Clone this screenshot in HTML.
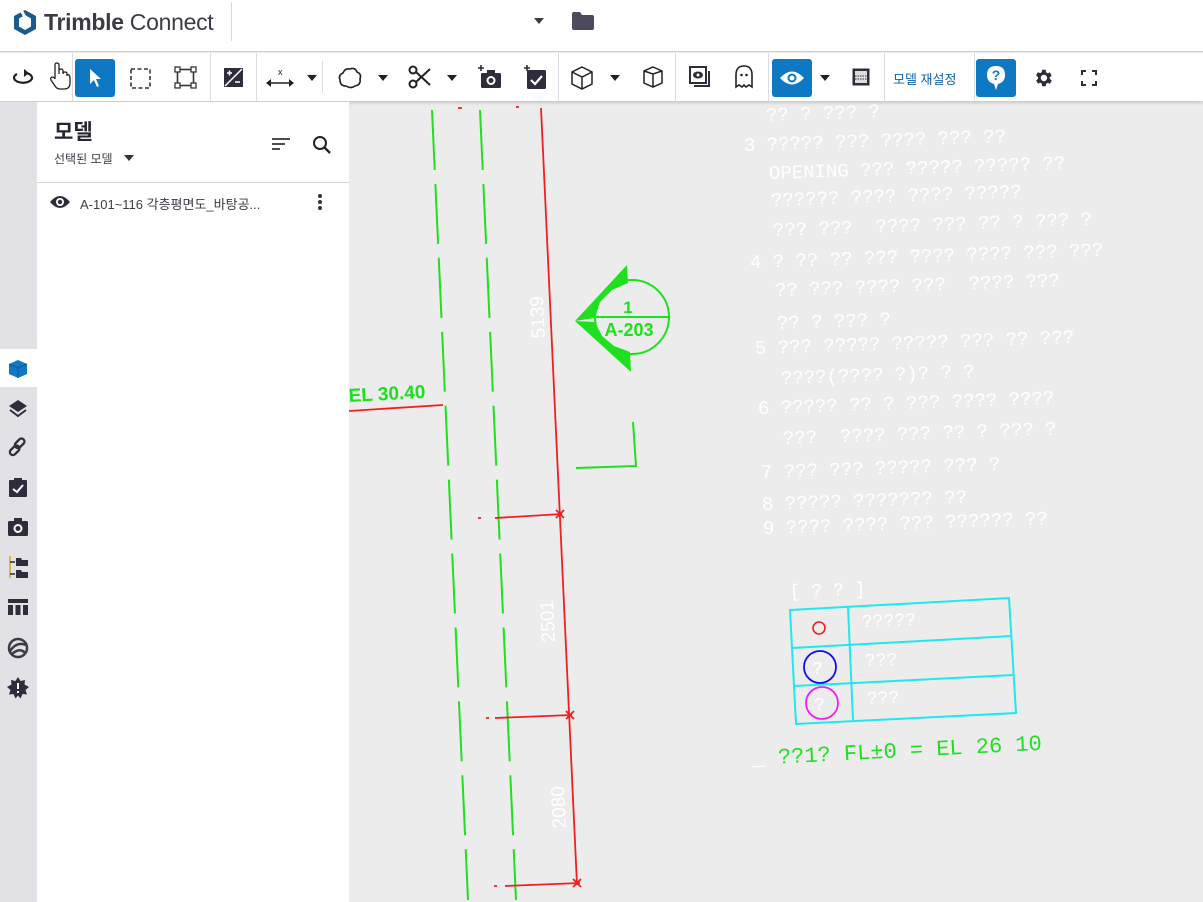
<!DOCTYPE html>
<html><head><meta charset="utf-8"><style>
*{margin:0;padding:0;box-sizing:border-box}
body{width:1203px;height:902px;overflow:hidden;background:#ececec;font-family:"Liberation Sans","Noto Sans CJK KR",sans-serif;position:relative}
#hdr{position:absolute;left:0;top:0;width:1203px;height:52px;background:#fff;border-bottom:1px solid #d0d0d6}
#tb{position:absolute;left:0;top:53px;width:1203px;height:48px;background:#fff;box-shadow:0 2px 3px rgba(0,0,0,.15)}
.sep{position:absolute;top:0;width:1px;height:48px;background:#dcdce0}
.ic{position:absolute;top:6px;width:40px;height:38px}
.on{background:#0e79c2;border-radius:3px}
#rail{position:absolute;left:0;top:102px;width:37px;height:800px;background:#e1e1e6}
#panel{position:absolute;left:37px;top:102px;width:312px;height:800px;background:#fff}
.cad{position:absolute;color:#fff;font-family:"Liberation Mono",monospace;font-size:19px;white-space:pre;transform:rotate(-2deg);transform-origin:left}
</style></head><body>
<div id="hdr">
<svg style="position:absolute;left:12px;top:9px" width="26" height="27" viewBox="0 0 26 27"><path d="M13 1 L24 7 L24 20 L13 26 L2 20 L2 7 Z" fill="#1b5b8c"/><path d="M13 6 L19 9.5 L19 17.5 L13 21 L7 17.5 L7 9.5 Z" fill="#fff"/><rect x="11" y="0" width="3" height="7" fill="#fff" transform="rotate(-30 13 7)"/></svg>
<div style="position:absolute;left:44px;top:9px;font-size:23px;color:#3b3b45;letter-spacing:-.3px"><span style="font-weight:bold">Trimble</span> Connect</div>
<div style="position:absolute;left:231px;top:2px;width:1px;height:39px;background:#d8d8dc"></div>
<svg style="position:absolute;left:534px;top:18px" width="10" height="6"><path d="M0 0H10L5 6Z" fill="#3b3b45"/></svg>
<svg style="position:absolute;left:572px;top:12px" width="22" height="18"><path d="M0 2Q0 0 2 0H8L10 3H20Q22 3 22 5V16Q22 18 20 18H2Q0 18 0 16Z" fill="#4c4a5c"/></svg>
</div>
<div id="tb">
<div class="sep" style="left:72px"></div><div class="sep" style="left:210px"></div><div class="sep" style="left:256px"></div><div class="sep" style="left:322px;top:8px;height:32px"></div><div class="sep" style="left:558px"></div><div class="sep" style="left:675px"></div><div class="sep" style="left:768px"></div><div class="sep" style="left:884px"></div><div class="sep" style="left:974px"></div>
<svg style="position:absolute;left:12px;top:16px" width="24" height="18" viewBox="0 0 24 18"><path d="M5 5A9 5 0 1 0 14 4" fill="none" stroke="#222" stroke-width="2.2"/><path d="M12 0L17 4L12 8Z" fill="#222"/></svg>
<svg style="position:absolute;left:48px;top:8px" width="24" height="30" viewBox="0 0 24 30"><path d="M7 18V4Q7 2 9 2Q11 2 11 4V13V10Q11 8 13 8Q15 8 15 10V13Q15 11 17 11Q19 11 19 13V15Q19 13 21 14Q22 15 22 17V22Q22 28 16 28H12Q9 28 7 25L3 19Q2 17 4 16Q6 16 7 18" fill="#fff" stroke="#222" stroke-width="1.3"/></svg>
<div class="ic on" style="left:75px"></div>
<svg style="position:absolute;left:88px;top:15px" width="14" height="20"><path d="M2 1L2 16L6 12L9 19L11 18L8 11L13 11Z" fill="#fff"/></svg>
<svg style="position:absolute;left:130px;top:15px" width="21" height="21"><rect x="1" y="1" width="19" height="19" fill="none" stroke="#333" stroke-width="1.6" stroke-dasharray="4 2.5"/></svg>
<svg style="position:absolute;left:174px;top:13px" width="23" height="23"><rect x="3.5" y="3.5" width="16" height="16" fill="none" stroke="#333" stroke-width="1.6"/><g fill="#fff" stroke="#333" stroke-width="1.3"><rect x="1" y="1" width="5" height="5"/><rect x="17" y="1" width="5" height="5"/><rect x="1" y="17" width="5" height="5"/><rect x="17" y="17" width="5" height="5"/></g></svg>
<svg style="position:absolute;left:224px;top:15px" width="19" height="19"><rect width="19" height="19" fill="#2d2d3c"/><path d="M18 1L1 18" stroke="#fff" stroke-width="1.5"/><path d="M3 5H8M5.5 2.5V7.5M11 14H16" stroke="#fff" stroke-width="1.5"/></svg>
<svg style="position:absolute;left:266px;top:14px" width="30" height="22"><text x="12" y="8" font-size="9" fill="#222" font-family="Liberation Sans">x</text><path d="M2 16H26" stroke="#222" stroke-width="1.6"/><path d="M0 16L5 12V20ZM28 16L23 12V20Z" fill="#222"/></svg>
<svg style="position:absolute;left:307px;top:22px" width="10" height="6"><path d="M0 0H10L5 6Z" fill="#222"/></svg>
<svg style="position:absolute;left:337px;top:13px" width="26" height="24"><path d="M6 7Q8 2 13 3Q18 1 20 6Q25 8 23 13Q24 19 18 20Q14 23 9 20Q3 20 3 14Q1 9 6 7Z" fill="none" stroke="#222" stroke-width="1.6"/></svg>
<svg style="position:absolute;left:378px;top:22px" width="10" height="6"><path d="M0 0H10L5 6Z" fill="#222"/></svg>
<svg style="position:absolute;left:408px;top:12px" width="24" height="24"><circle cx="5" cy="5" r="3.5" fill="none" stroke="#222" stroke-width="2"/><circle cx="5" cy="19" r="3.5" fill="none" stroke="#222" stroke-width="2"/><path d="M8 7L22 20M8 17L22 4" stroke="#222" stroke-width="2"/></svg>
<svg style="position:absolute;left:447px;top:22px" width="10" height="6"><path d="M0 0H10L5 6Z" fill="#222"/></svg>
<svg style="position:absolute;left:478px;top:12px" width="24" height="24"><rect x="3" y="8" width="20" height="15" rx="1.5" fill="#2d2d3c"/><rect x="9" y="5" width="8" height="4" fill="#2d2d3c"/><circle cx="13" cy="15.5" r="4.5" fill="#fff"/><circle cx="13" cy="15.5" r="2.5" fill="#2d2d3c"/><path d="M0 3H6M3 0V6" stroke="#2d2d3c" stroke-width="1.6"/></svg>
<svg style="position:absolute;left:524px;top:12px" width="24" height="24"><rect x="3" y="5" width="19" height="19" rx="1.5" fill="#2d2d3c"/><path d="M7 15L11 19L18 11" fill="none" stroke="#fff" stroke-width="2.2"/><path d="M0 3H6M3 0V6" stroke="#2d2d3c" stroke-width="1.6"/></svg>
<svg style="position:absolute;left:571px;top:13px" width="22" height="24"><path d="M11 1L21 6V18L11 23L1 18V6Z M1 6L11 11L21 6M11 11V23" fill="none" stroke="#222" stroke-width="1.5"/></svg>
<svg style="position:absolute;left:610px;top:22px" width="10" height="6"><path d="M0 0H10L5 6Z" fill="#222"/></svg>
<svg style="position:absolute;left:643px;top:13px" width="20" height="22"><path d="M10 1L19 5V17L10 21L1 17V5Z M1 5L10 8L19 5M10 8V21" fill="none" stroke="#222" stroke-width="1.5"/></svg>
<svg style="position:absolute;left:688px;top:12px" width="24" height="24"><rect x="2" y="2" width="16" height="16" fill="#fff" stroke="#2d2d3c" stroke-width="2"/><path d="M21 6V21H6" fill="none" stroke="#2d2d3c" stroke-width="2"/><ellipse cx="10" cy="10" rx="5" ry="3.5" fill="#2d2d3c"/><circle cx="10" cy="10" r="1.5" fill="#fff"/></svg>
<svg style="position:absolute;left:734px;top:12px" width="20" height="24"><path d="M2 22V10Q2 1 10 1Q18 1 18 10V22L15 20L12 22L10 20L8 22L5 20Z" fill="none" stroke="#222" stroke-width="1.6"/><circle cx="7.5" cy="10" r="1.3" fill="#222"/><circle cx="12.5" cy="10" r="1.3" fill="#222"/></svg>
<div class="ic on" style="left:772px"></div>
<svg style="position:absolute;left:779px;top:16px" width="26" height="18"><path d="M1 9Q13 -4 25 9Q13 22 1 9Z" fill="#fff"/><circle cx="13" cy="9" r="4.5" fill="#0e79c2"/><circle cx="13" cy="9" r="2.5" fill="#fff"/></svg>
<svg style="position:absolute;left:820px;top:22px" width="10" height="6"><path d="M0 0H10L5 6Z" fill="#222"/></svg>
<svg style="position:absolute;left:852px;top:15px" width="18" height="18"><rect x="0.5" y="0.5" width="17" height="17" fill="#2d2d3c"/><rect x="3" y="3" width="12" height="12" fill="#ddd"/><path d="M3 8H15M3 11H15" stroke="#555" stroke-width="1.2" stroke-dasharray="1.5 1"/></svg>
<div style="position:absolute;left:893px;top:16px;font-size:13px;color:#0e63a8">모델 재설정</div>
<div class="ic on" style="left:976px"></div>
<svg style="position:absolute;left:986px;top:12px" width="20" height="26"><path d="M10 1Q19 1 19 10Q19 17 12 19L10 25L8 19Q1 17 1 10Q1 1 10 1Z" fill="#fff"/><text x="10" y="15" font-size="14" font-weight="bold" fill="#0e79c2" text-anchor="middle" font-family="Liberation Sans">?</text></svg>
<svg style="position:absolute;left:1032px;top:14px" width="22" height="22" viewBox="0 0 24 24"><path fill="#2d2d3c" d="M19.4 13a7.5 7.5 0 0 0 0-2l2.1-1.6-2-3.5-2.5 1a7.6 7.6 0 0 0-1.700-1L15 3h-4l-.4 2.7a7.6 7.6 0 0 0-1.700 1l-2.500-1-2 3.500L6.600 11a7.500 7.500 0 0 0 0 2l-2.100 1.600 2 3.500 2.500-1a7.600 7.600 0 0 0 1.700 1L11 21h4l.4-2.700a7.600 7.600 0 0 0 1.700-1l2.500 1 2-3.500zM13 15.500a3.500 3.500 0 1 1 0-7 3.500 3.500 0 0 1 0 7z"/></svg>
<svg style="position:absolute;left:1081px;top:17px" width="16" height="16"><path d="M1 5V1H5M11 1H15V5M15 11V15H11M5 15H1V11" fill="none" stroke="#2d2d3c" stroke-width="2"/></svg>
</div>
<div id="rail">
<div style="position:absolute;left:0;top:247px;width:37px;height:38px;background:#fff"></div>
<svg style="position:absolute;left:8px;top:257px" width="20" height="20"><path d="M10 1L19 5V15L10 19L1 15V5Z" fill="#0e79c2"/><path d="M1 5L10 9L19 5M10 9V19" stroke="#0a5a95" stroke-width="1" fill="none"/></svg>
<svg style="position:absolute;left:8px;top:297px" width="20" height="20"><path d="M10 1L19 7L10 13L1 7Z" fill="#2d2d3c"/><path d="M2 11L10 17L18 11" fill="none" stroke="#2d2d3c" stroke-width="2"/></svg>
<svg style="position:absolute;left:8px;top:335px" width="20" height="20"><g fill="none" stroke="#2d2d3c" stroke-width="2.3"><rect x="9" y="1" width="6" height="11" rx="3" transform="rotate(45 12 6)"/><rect x="4" y="8" width="6" height="11" rx="3" transform="rotate(45 7 13)"/></g></svg>
<svg style="position:absolute;left:8px;top:375px" width="20" height="20"><rect x="1" y="3" width="18" height="17" rx="1" fill="#2d2d3c"/><rect x="6" y="1" width="8" height="4" fill="#2d2d3c"/><path d="M5 12L9 15L15 8" fill="none" stroke="#fff" stroke-width="2"/></svg>
<svg style="position:absolute;left:7px;top:415px" width="22" height="20"><rect x="1" y="4" width="20" height="15" rx="1.5" fill="#2d2d3c"/><rect x="7" y="1" width="8" height="4" fill="#2d2d3c"/><circle cx="11" cy="11.5" r="4.5" fill="#fff"/><circle cx="11" cy="11.5" r="2.5" fill="#2d2d3c"/></svg>
<svg style="position:absolute;left:7px;top:453px" width="22" height="24"><path d="M3 1V23" stroke="#e0a020" stroke-width="1.5"/><path d="M3 7H8M3 19H8" stroke="#2d2d3c" stroke-width="1.5"/><path d="M9 3H14L15 5H21V11H9Z M9 15H14L15 17H21V23H9Z" fill="#2d2d3c"/></svg>
<svg style="position:absolute;left:7px;top:496px" width="22" height="18"><rect x="1" y="1" width="20" height="4" fill="#2d2d3c"/><rect x="1" y="7" width="5" height="10" fill="#2d2d3c"/><rect x="8.5" y="7" width="5" height="10" fill="#2d2d3c"/><rect x="16" y="7" width="5" height="10" fill="#2d2d3c"/></svg>
<svg style="position:absolute;left:7px;top:535px" width="22" height="22"><circle cx="11" cy="11" r="9" fill="none" stroke="#3b3b45" stroke-width="2.5"/><path d="M3 14Q10 4 19 8M5 17Q13 10 18 16" fill="none" stroke="#3b3b45" stroke-width="2.5"/></svg>
<svg style="position:absolute;left:7px;top:575px" width="22" height="22"><path d="M11 0L13.5 4L18 3L17.5 7.5L22 10L18.5 13L20 17.5L15.5 17L13.5 21.5L11 18.5L8.5 21.5L6.5 17L2 17.5L3.5 13L0 10L4.5 7.5L4 3L8.5 4Z" fill="#2d2d3c"/><path d="M11 6V12M11 14V16" stroke="#fff" stroke-width="2"/></svg>
</div>
<div id="panel">
<div style="position:absolute;left:17px;top:14px;font-size:21px;font-weight:bold;color:#25252f">모델</div>
<div style="position:absolute;left:17px;top:48px;font-size:12px;color:#3b3b45">선택된 모델</div>
<svg style="position:absolute;left:87px;top:53px" width="10" height="6"><path d="M0 0H10L5 6Z" fill="#333"/></svg>
<svg style="position:absolute;left:234px;top:35px" width="20" height="16"><path d="M1 2H19M1 7H14M1 12H9" stroke="#333" stroke-width="1.8"/></svg>
<svg style="position:absolute;left:275px;top:33px" width="20" height="20"><circle cx="8" cy="8" r="6" fill="none" stroke="#222" stroke-width="2"/><path d="M12.5 12.5L18 18" stroke="#222" stroke-width="2.3"/></svg>
<div style="position:absolute;left:0;top:80px;width:312px;height:1px;background:#d5d5da"></div>
<svg style="position:absolute;left:12px;top:92px" width="22" height="16"><path d="M1 8Q11 -4 21 8Q11 20 1 8Z" fill="#2d2d3c"/><circle cx="11" cy="8" r="4" fill="#fff"/><circle cx="11" cy="8" r="2.2" fill="#2d2d3c"/></svg>
<div style="position:absolute;left:43px;top:92px;font-size:13px;color:#3b3b45">A-101~116 각층평면도_바탕공...</div>
<svg style="position:absolute;left:280px;top:91px" width="6" height="18"><circle cx="3" cy="3" r="2" fill="#333"/><circle cx="3" cy="9" r="2" fill="#333"/><circle cx="3" cy="15" r="2" fill="#333"/></svg>
</div>
<svg style="position:absolute;left:349px;top:101px" width="854" height="801" viewBox="349 101 854 801">
<g stroke="#1ee01e" stroke-width="2" fill="none">
<path d="M432 110L468 900" stroke-dasharray="60 14"/>
<path d="M480 110L516 900" stroke-dasharray="60 14"/>
<circle cx="632" cy="317" r="37"/>
<path d="M596 317H669"/>
<path d="M576 468L636 466L633 422"/>
</g>
<path d="M575 321L627 265L628 283L612 290L600 302L595 318Z M575 321L631 372L630 352L614 346L602 336L595 322Z" fill="#1ee01e"/>
<text x="628" y="313" font-size="17" font-weight="bold" fill="#1ee01e" text-anchor="middle" font-family="Liberation Sans">1</text>
<text x="629" y="336" font-size="18" font-weight="bold" fill="#1ee01e" text-anchor="middle" font-family="Liberation Sans">A-203</text>
<text x="349" y="402" font-size="19" font-weight="bold" fill="#1ee01e" font-family="Liberation Sans" transform="rotate(-3 349 402)">EL 30.40</text>
<g stroke="#f02020" stroke-width="1.8" fill="none">
<path d="M541 108L577 885"/>
<path d="M349 411L443 405"/>
<path d="M495 518L562 514"/>
<path d="M495 718L572 715"/>
<path d="M505 886L580 883"/>
<path d="M458 108h4M516 107h3M478 518h3M486 718h3M494 886h3"/>
<path d="M556 510l8 8M556 518l8-8M566 711l8 8M566 719l8-8M573 879l8 8M573 887l8-8"/>
</g>
<g fill="#fff" font-family="Liberation Sans" font-size="19">
<text transform="translate(545 338) rotate(-93)">5139</text>
<text transform="translate(555 642) rotate(-93)">2501</text>
<text transform="translate(566 828) rotate(-93)">2080</text>
</g>
<g stroke="#1ee8f0" stroke-width="2" fill="none">
<path d="M790 610L1009 598L1016 713L796 724Z"/>
<path d="M848 607L853 720"/>
<path d="M792 648L1012 636M794 686L1014 675"/>
</g>
<circle cx="819" cy="628" r="6" fill="none" stroke="#f02020" stroke-width="1.6"/>
<circle cx="820" cy="667" r="16" fill="none" stroke="#1010e0" stroke-width="1.8"/>
<circle cx="822" cy="703" r="16" fill="none" stroke="#f020f0" stroke-width="1.8"/>
<g fill="#fff" font-family="Liberation Mono" font-size="18">
<text x="790" y="597" transform="rotate(-2 790 597)">[ ? ? ]</text>
<text x="862" y="627" transform="rotate(-2 862 627)">?????</text>
<text x="865" y="666" transform="rotate(-2 865 666)">???</text>
<text x="867" y="704" transform="rotate(-2 867 704)">???</text>
<text x="812" y="674">?</text><text x="814" y="710">?</text>
</g>
<text x="752" y="765" font-family="Liberation Mono" font-size="22" fill="#1ee01e" transform="rotate(-3 752 765)"><tspan fill="#fff">_</tspan> ??1?  FL±0 = EL 26 10</text>
</svg>
<div class="cad" style="left:766px;top:105px">?? ? ??? ?</div>
<div class="cad" style="left:744px;top:135px">3 ????? ??? ???? ??? ??</div>
<div class="cad" style="left:769px;top:163px">OPENING ??? ????? ????? ??</div>
<div class="cad" style="left:771px;top:190px">?????? ???? ???? ?????</div>
<div class="cad" style="left:773px;top:220px">??? ???  ???? ??? ?? ? ??? ?</div>
<div class="cad" style="left:750px;top:252px">4 ? ?? ?? ??? ???? ???? ??? ???</div>
<div class="cad" style="left:775px;top:280px">?? ??? ???? ???  ???? ???</div>
<div class="cad" style="left:777px;top:313px">?? ? ??? ?</div>
<div class="cad" style="left:755px;top:338px">5 ??? ????? ????? ??? ?? ???</div>
<div class="cad" style="left:781px;top:368px">????(???? ?)? ? ?</div>
<div class="cad" style="left:758px;top:398px">6 ????? ?? ? ??? ???? ????</div>
<div class="cad" style="left:783px;top:428px">???  ???? ??? ?? ? ??? ?</div>
<div class="cad" style="left:761px;top:462px">7 ??? ??? ????? ??? ?</div>
<div class="cad" style="left:762px;top:494px">8 ????? ??????? ??</div>
<div class="cad" style="left:763px;top:518px">9 ???? ???? ??? ?????? ??</div>
</body></html>
